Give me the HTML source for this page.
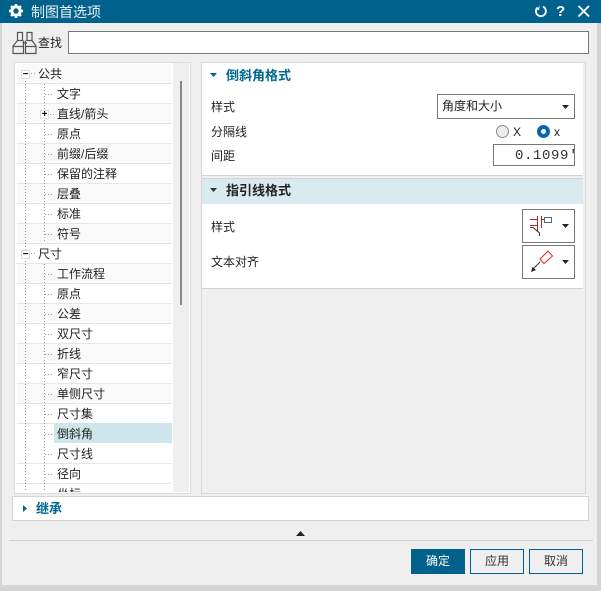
<!DOCTYPE html>
<html><head><meta charset="utf-8">
<style>
html,body{margin:0;padding:0;background:#d4d4d4}
#w{position:relative;width:601px;height:591px;overflow:hidden;background:#d4d4d4;font:12px/16px "Liberation Sans","Noto Sans CJK SC",sans-serif;color:#222}
#w div,#w span.a,#w svg{position:absolute}
.t{white-space:nowrap}
.r{left:17px;width:155px;height:19px;border-bottom:1px solid #e6e6e6}
.o{background:#fafafa}
.w{background:#fff}
.vd{width:1px;background:repeating-linear-gradient(to bottom,#999 0 1px,transparent 1px 3px)}
.hd{height:1px;background:repeating-linear-gradient(to right,#999 0 1px,transparent 1px 3px)}
.bx{width:7px;height:7px;border:1px solid #ddd;background:#fff;font:bold 10px/7px "Liberation Sans",sans-serif;text-align:center;color:#111}
.lb{left:57px}
.h{font-size:13px;font-weight:bold}
.btn{width:52px;height:23px;border:1px solid #00618c;text-align:center;line-height:23px}
</style></head><body>
<div id="w">
<div style="left:2px;top:0;width:595px;height:585px;background:#efefef"></div>
<div style="left:0;top:0;width:601px;height:23px;background:#00618c"></div>

<svg style="left:8px;top:3px" width="16" height="16" viewBox="0 0 16 16"><circle cx="8" cy="8" r="4.2" fill="none" stroke="#fff" stroke-width="3"/><g stroke="#fff" stroke-width="2.4"><path d="M8 1v3M8 12v3M1 8h3M12 8h3M3 3l2 2M11 11l2 2M13 3l-2 2M5 11l-2 2"/></g></svg>
<div class="t" style="left:31px;top:3px;font-size:14px;line-height:18px;color:#e8f2f6">制图首选项</div>
<svg style="left:533px;top:3px" width="16" height="16" viewBox="0 0 16 16"><g transform="translate(16 0) scale(-1 1)"><path d="M6 3.6A5 5 0 1 0 11.5 4.5" fill="none" stroke="#fff" stroke-width="1.8"/><path d="M9.5 2v5h2z" fill="#fff" transform="rotate(-8 10 4)"/></g></svg>
<div class="t" style="left:556px;top:2px;font:bold 15px/19px 'Liberation Sans',sans-serif;color:#fff">?</div>
<svg style="left:577px;top:5px" width="14" height="13" viewBox="0 0 14 13"><path d="M1.5 1l10.5 10.5M12 1L1.500 11.500" stroke="#fff" stroke-width="1.800"/></svg>

<svg style="left:12px;top:31px" width="25" height="24" viewBox="0 0 25 24" fill="none" stroke="#555" stroke-width="1.200"><path d="M5.500 1.500h5v8h-5zM15 1.500h5v8h-5zM5.500 9.500L1 15v7.500h10.500V9.500M20 9.500l4 5.500v7.500H13.500V9.500M10.500 12H15M1 15.500h10.500M13.500 15.500H24"/></svg>
<div class="t" style="left:38px;top:35px">查找</div>
<div style="left:68px;top:31px;width:519px;height:21px;border:1px solid #777;background:#fff"></div>

<!-- tree -->
<div style="left:14px;top:62px;width:175px;height:430px;border:1px solid #ddd;background:#fff"></div>
<div style="left:173px;top:63px;width:16px;height:429px;background:#efefef"></div>
<div style="left:180px;top:81px;width:2px;height:224px;background:#888"></div>

<div class="r o" style="top:64px"></div>
<div class="r w" style="top:84px"></div>
<div class="r o" style="top:104px"></div>
<div class="r w" style="top:124px"></div>
<div class="r o" style="top:144px"></div>
<div class="r w" style="top:164px"></div>
<div class="r o" style="top:184px"></div>
<div class="r w" style="top:204px"></div>
<div class="r o" style="top:224px"></div>
<div class="r w" style="top:244px"></div>
<div class="r o" style="top:264px"></div>
<div class="r w" style="top:284px"></div>
<div class="r o" style="top:304px"></div>
<div class="r w" style="top:324px"></div>
<div class="r o" style="top:344px"></div>
<div class="r w" style="top:364px"></div>
<div class="r o" style="top:384px"></div>
<div class="r w" style="top:404px"></div>
<div style="left:54px;top:423px;width:118px;height:20px;background:#cde5eb"></div>
<div class="r w" style="top:444px"></div>
<div class="r w" style="top:464px"></div>
<div style="left:17px;top:484px;width:155px;height:8px;background:#fff;overflow:hidden"><span class="a t" style="left:40px;top:2px">坐标</span></div>

<div class="vd" style="left:25px;top:78px;height:414px"></div>
<div class="vd" style="left:44px;top:84px;height:158px"></div>
<div class="vd" style="left:44px;top:264px;height:228px"></div>
<div class="hd" style="left:31px;top:73px;width:5px"></div>
<div class="hd" style="left:31px;top:253px;width:5px"></div>
<div class="hd" style="left:45px;top:94px;width:9px"></div>
<div class="hd" style="left:50px;top:114px;width:4px"></div>
<div class="hd" style="left:45px;top:134px;width:9px"></div>
<div class="hd" style="left:45px;top:154px;width:9px"></div>
<div class="hd" style="left:45px;top:174px;width:9px"></div>
<div class="hd" style="left:45px;top:194px;width:9px"></div>
<div class="hd" style="left:45px;top:214px;width:9px"></div>
<div class="hd" style="left:45px;top:234px;width:9px"></div>
<div class="hd" style="left:45px;top:274px;width:9px"></div>
<div class="hd" style="left:45px;top:294px;width:9px"></div>
<div class="hd" style="left:45px;top:314px;width:9px"></div>
<div class="hd" style="left:45px;top:334px;width:9px"></div>
<div class="hd" style="left:45px;top:354px;width:9px"></div>
<div class="hd" style="left:45px;top:374px;width:9px"></div>
<div class="hd" style="left:45px;top:394px;width:9px"></div>
<div class="hd" style="left:45px;top:414px;width:9px"></div>
<div class="hd" style="left:45px;top:434px;width:9px"></div>
<div class="hd" style="left:45px;top:454px;width:9px"></div>
<div class="hd" style="left:45px;top:474px;width:9px"></div>

<div class="bx" style="left:21px;top:70px">−</div>
<div class="bx" style="left:21px;top:250px">−</div>
<div class="bx" style="left:40px;top:110px">+</div>

<div class="t" style="left:38px;top:66px">公共</div>
<div class="t lb" style="top:86px">文字</div>
<div class="t lb" style="top:106px">直线/箭头</div>
<div class="t lb" style="top:126px">原点</div>
<div class="t lb" style="top:146px">前缀/后缀</div>
<div class="t lb" style="top:166px">保留的注释</div>
<div class="t lb" style="top:186px">层叠</div>
<div class="t lb" style="top:206px">标准</div>
<div class="t lb" style="top:226px">符号</div>
<div class="t" style="left:38px;top:246px">尺寸</div>
<div class="t lb" style="top:266px">工作流程</div>
<div class="t lb" style="top:286px">原点</div>
<div class="t lb" style="top:306px">公差</div>
<div class="t lb" style="top:326px">双尺寸</div>
<div class="t lb" style="top:346px">折线</div>
<div class="t lb" style="top:366px">窄尺寸</div>
<div class="t lb" style="top:386px">单侧尺寸</div>
<div class="t lb" style="top:406px">尺寸集</div>
<div class="t lb" style="top:426px">倒斜角</div>
<div class="t lb" style="top:446px">尺寸线</div>
<div class="t lb" style="top:466px">径向</div>

<!-- right panel -->
<div style="left:201px;top:62px;width:383px;height:430px;border:1px solid #d8d8d8;background:#efefef"></div>
<div style="left:202px;top:63px;width:381px;height:112px;background:#fff"></div>
<div style="left:202px;top:175px;width:381px;height:1px;background:#d4d4d4"></div>
<svg style="left:210px;top:73px" width="8" height="5"><path d="M0 0h7L3.500 4z" fill="#00688f"/></svg>
<div class="t h" style="left:226px;top:68px;color:#00688f">倒斜角格式</div>
<div class="t" style="left:211px;top:99px">样式</div>
<div class="t" style="left:211px;top:124px">分隔线</div>
<div class="t" style="left:211px;top:148px">间距</div>

<div style="left:437px;top:94px;width:136px;height:23px;border:1px solid #777;background:#fff"></div>
<div class="t" style="left:442px;top:98px">角度和大小</div>
<svg style="left:562px;top:105px" width="8" height="5"><path d="M0 0h7L3.500 4z" fill="#222"/></svg>

<div style="left:496px;top:125px;width:11px;height:11px;border:1px solid #888;border-radius:50%;background:#eee"></div>
<div class="t" style="left:513px;top:124px">X</div>
<div style="left:537px;top:125px;width:5px;height:5px;border:4px solid #0a64b4;border-radius:50%;background:#fff"></div>
<div class="t" style="left:554px;top:124px">x</div>

<div style="left:493px;top:144px;width:80px;height:20px;border:1px solid #777;background:#fff"></div>
<div class="t" style="left:515px;top:147px;width:59px;overflow:hidden;font:14px/18px 'Liberation Mono',monospace;color:#333;letter-spacing:.6px">0.1099'</div>

<div style="left:202px;top:179px;width:381px;height:109px;background:#fff"></div>
<div style="left:202px;top:178px;width:381px;height:1px;background:#d4d4d4"></div>
<div style="left:202px;top:179px;width:381px;height:25px;background:#d9eaf0"></div>
<div style="left:202px;top:288px;width:381px;height:1px;background:#d4d4d4"></div>
<svg style="left:210px;top:188px" width="8" height="5"><path d="M0 0h7L3.500 4z" fill="#333"/></svg>
<div class="t h" style="left:226px;top:183px;color:#222">指引线格式</div>
<div class="t" style="left:211px;top:219px">样式</div>
<div class="t" style="left:211px;top:254px">文本对齐</div>

<div style="left:522px;top:209px;width:51px;height:32px;border:1px solid #777;background:#fff"></div>
<svg style="left:528px;top:214px" width="28" height="24" fill="none"><path d="M2 5.500H9M2 11.500H9M9.500 2V18M13.500 2V14M13.500 5.500H16" stroke="#b22" stroke-width="1"/><rect x="16.500" y="3.500" width="7" height="5" stroke="#567" stroke-width="1"/><path d="M2 13.500H5L11.500 19V22" stroke="#333" stroke-width="1"/></svg>
<svg style="left:562px;top:224px" width="8" height="5"><path d="M0 0h7L3.500 4z" fill="#222"/></svg>
<div style="left:522px;top:245px;width:51px;height:32px;border:1px solid #777;background:#fff"></div>
<svg style="left:528px;top:250px" width="28" height="24" fill="none"><path d="M12 9L20 1l4.500 5-8.500 7.500z" stroke="#e22" stroke-width="1"/><path d="M12 12L5 19" stroke="#333" stroke-width="1"/><path d="M3 22l1.500-5 3.500 3z" fill="#222"/></svg>
<svg style="left:562px;top:260px" width="8" height="5"><path d="M0 0h7L3.500 4z" fill="#222"/></svg>

<!-- inherit -->
<div style="left:12px;top:496px;width:575px;height:23px;border:1px solid #d4d4d4;background:#fff"></div>
<svg style="left:23px;top:505px" width="5" height="8"><path d="M0 0v7l4-3.500z" fill="#00688f"/></svg>
<div class="t h" style="left:36px;top:501px;color:#00688f">继承</div>

<svg style="left:296px;top:531px" width="9" height="5"><path d="M0 5h9L4.500 0z" fill="#222"/></svg>
<div style="left:9px;top:540px;width:584px;height:1px;background:#d4d4d4"></div>

<div class="btn t" style="left:411px;top:549px;background:#00618c;color:#fff">确定</div>
<div class="btn t" style="left:470px;top:549px;color:#333">应用</div>
<div class="btn t" style="left:529px;top:549px;color:#333">取消</div>
</div>
</body></html>
